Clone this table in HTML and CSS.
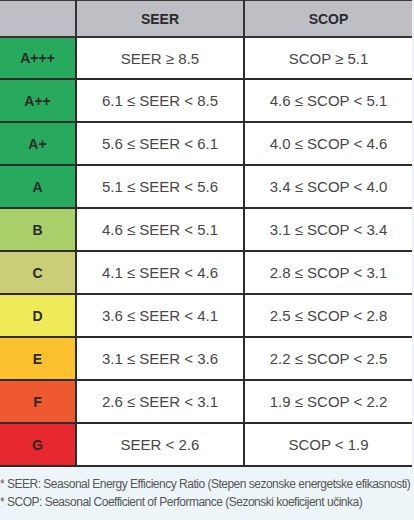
FILE: index.html
```html
<!DOCTYPE html>
<html>
<head>
<meta charset="utf-8">
<link rel="stylesheet" href="styles.css">
</head>
<body>
<div class="page">
  <table class="eff">
    <thead>
      <tr><th class="lbl"></th><th>SEER</th><th>SCOP</th></tr>
    </thead>
    <tbody>
      <tr><td class="lbl c-a3">A+++</td><td>SEER ≥ 8.5</td><td>SCOP ≥ 5.1</td></tr>
      <tr><td class="lbl c-a2">A++</td><td>6.1 ≤ SEER &lt; 8.5</td><td>4.6 ≤ SCOP &lt; 5.1</td></tr>
      <tr><td class="lbl c-a1">A+</td><td>5.6 ≤ SEER &lt; 6.1</td><td>4.0 ≤ SCOP &lt; 4.6</td></tr>
      <tr><td class="lbl c-a">A</td><td>5.1 ≤ SEER &lt; 5.6</td><td>3.4 ≤ SCOP &lt; 4.0</td></tr>
      <tr><td class="lbl c-b">B</td><td>4.6 ≤ SEER &lt; 5.1</td><td>3.1 ≤ SCOP &lt; 3.4</td></tr>
      <tr><td class="lbl c-c">C</td><td>4.1 ≤ SEER &lt; 4.6</td><td>2.8 ≤ SCOP &lt; 3.1</td></tr>
      <tr><td class="lbl c-d">D</td><td>3.6 ≤ SEER &lt; 4.1</td><td>2.5 ≤ SCOP &lt; 2.8</td></tr>
      <tr><td class="lbl c-e">E</td><td>3.1 ≤ SEER &lt; 3.6</td><td>2.2 ≤ SCOP &lt; 2.5</td></tr>
      <tr><td class="lbl c-f">F</td><td>2.6 ≤ SEER &lt; 3.1</td><td>1.9 ≤ SCOP &lt; 2.2</td></tr>
      <tr><td class="lbl c-g">G</td><td>SEER &lt; 2.6</td><td>SCOP &lt; 1.9</td></tr>
    </tbody>
  </table>
  <div class="notes">
    <p>* SEER: Seasonal Energy Efficiency Ratio (Stepen sezonske energetske efikasnosti)</p>
    <p>* SCOP: Seasonal Coefficient of Performance (Sezonski koeficijent učinka)</p>
  </div>
</div>
</body>
</html>
```
FILE: styles.css
```css
html, body {
  margin: 0;
  padding: 0;
  background: #eef5f9;
}
.page {
  width: 414px;
  height: 520px;
  overflow: hidden;
  font-family: "Liberation Sans", Arial, sans-serif;
}
.eff {
  width: 412px;
  border-collapse: collapse;
  table-layout: fixed;
  background: #fff;
  border-top: 1px solid #3a3a3a;
}
.eff th {
  background: #bdbfc4;
  height: 35px;
  font-size: 14px;
  font-weight: bold;
  color: #2b2b2b;
  border-left: 2px solid #333;
  border-bottom: 2px solid #333;
  padding: 0;
}
.eff th:first-child { border-left: none; width: 75px; }
.eff th:nth-child(2) { width: 166px; }
.eff td {
  height: 41px;
  padding: 0;
  text-align: center;
  font-size: 15px;
  color: #474747;
  border-left: 2px solid #2d2d2d;
  border-bottom: 2px solid #2d2d2d;
}
.eff tr:first-child td { height: 40px; }
.eff td.lbl {
  border-left: none;
  font-size: 14px;
  font-weight: bold;
  color: #2a2a2a;
}
.c-a3, .c-a2, .c-a1, .c-a { background: #27aa5e; }
.c-b { background: #a9d06a; }
.c-c { background: #cace78; }
.c-d { background: #eeea58; }
.c-e { background: #fcc12e; }
.c-f { background: #ee5930; }
.c-g { background: #e7282f; }
.notes {
  padding: 8px 0 0 0;
  font-size: 12px;
  color: #555;
  letter-spacing: -0.5px;
}
.notes p {
  margin: 0;
  line-height: 18px;
  white-space: nowrap;
}
```
